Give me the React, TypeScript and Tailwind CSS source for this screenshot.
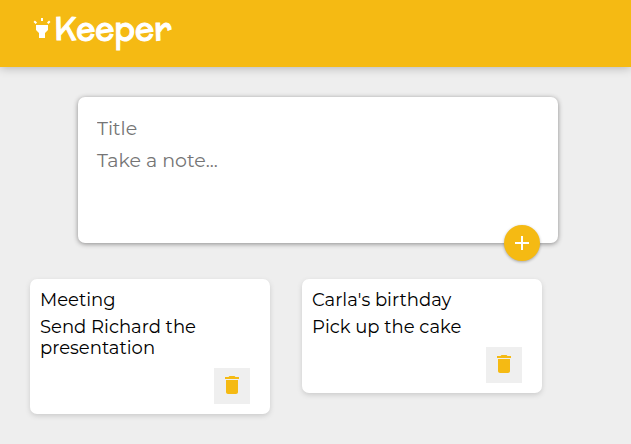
import { useState } from "react";

type Note = { id: number; title: string; content: string };

const initialNotes: Note[] = [
  { id: 1, title: "Meeting", content: "Send Richard the presentation" },
  { id: 2, title: "Carla's birthday", content: "Pick up the cake" },
];

function Header() {
  return (
    <header className="relative flex h-[67px] items-center bg-[#f5ba13] px-[30px] pb-3 shadow-[0_0_10px_rgba(0,0,0,0.3)]">
      <h1 className="flex items-center font-['McLaren',Montserrat,Inter,sans-serif] text-[32px] leading-10 font-normal text-white [-webkit-text-stroke:1px_white]">
        <svg viewBox="0 0 24 24" className="size-6 shrink-0 fill-current" aria-hidden="true">
          <path d="M6 14l3 3v5h6v-5l3-3V9H6zM11 2h2v3h-2zM3.5 5.875L4.914 4.46l2.12 2.122L5.62 7.997zM16.96 6.585l2.123-2.12 1.414 1.414L18.375 8z" />
        </svg>
        Keeper
      </h1>
    </header>
  );
}

function CreateArea({ onAdd }: { onAdd: (title: string, content: string) => void }) {
  const [title, setTitle] = useState("");
  const [content, setContent] = useState("");
  return (
    <form
      className="relative mx-auto w-full max-w-[480px] rounded-[7px] bg-white p-[15px] shadow-[0_1px_5px_rgb(138,137,137)]"
      onSubmit={(event) => {
        event.preventDefault();
        onAdd(title, content);
        setTitle("");
        setContent("");
      }}
    >
      <input
        aria-label="Title"
        placeholder="Title"
        value={title}
        onChange={(event) => setTitle(event.target.value)}
        className="block h-8 w-full px-1 text-[19px] leading-6 outline-none placeholder:text-[#757575]"
      />
      <textarea
        aria-label="Note"
        placeholder="Take a note..."
        rows={3}
        value={content}
        onChange={(event) => setContent(event.target.value)}
        className="block h-21 w-full resize-none px-1 py-[5px] text-[19px] leading-6 outline-none placeholder:text-[#757575]"
      />
      <button
        type="submit"
        aria-label="Add"
        className="absolute right-[18px] -bottom-[18px] flex size-9 items-center justify-center rounded-full bg-[#f5ba13] text-white shadow-[0_1px_3px_rgba(0,0,0,0.3)]"
      >
        <svg viewBox="0 0 24 24" className="size-6 fill-current" aria-hidden="true">
          <path d="M19 13h-6v6h-2v-6H5v-2h6V5h2v6h6z" />
        </svg>
      </button>
    </form>
  );
}

function NoteCard({ note, onDelete }: { note: Note; onDelete: () => void }) {
  return (
    <article className="flex w-60 flex-col rounded-[7px] bg-white px-[10px] pt-[11px] pb-[10px] shadow-[0_2px_5px_#ccc]">
      <h2 className="mb-[6px] text-[18px] leading-[21px] text-black">{note.title}</h2>
      <p className="mb-[9px] text-[18px] leading-[21px] text-black">{note.content}</p>
      <button
        type="button"
        aria-label="Delete"
        onClick={onDelete}
        className="mr-[10px] flex size-9 items-center justify-center self-end bg-[#efefef] pb-[2px] text-[#f5ba13]"
      >
        <svg viewBox="0 0 24 24" className="size-6 fill-current" aria-hidden="true">
          <path d="M6 19c0 1.100.9 2 2 2h8c1.100 0 2-.9 2-2V7H6zM19 4h-3.500l-1-1h-5l-1 1H5v2h14z" />
        </svg>
      </button>
    </article>
  );
}

export default function App() {
  const [notes, setNotes] = useState(initialNotes);
  return (
    <div className="min-h-screen bg-[#eee] font-['Montserrat',Inter,sans-serif]">
      <Header />
      <main className="pt-[30px] pb-[30px]">
        <div className="pl-[5px]">
          <CreateArea
            onAdd={(title, content) => setNotes([...notes, { id: Date.now(), title, content }])}
          />
        </div>
        <section className="mt-9 flex flex-wrap items-start gap-8 px-[30px]">
          {notes.map((note) => (
            <NoteCard
              key={note.id}
              note={note}
              onDelete={() => setNotes(notes.filter((item) => item.id !== note.id))}
            />
          ))}
        </section>
      </main>
    </div>
  );
}
